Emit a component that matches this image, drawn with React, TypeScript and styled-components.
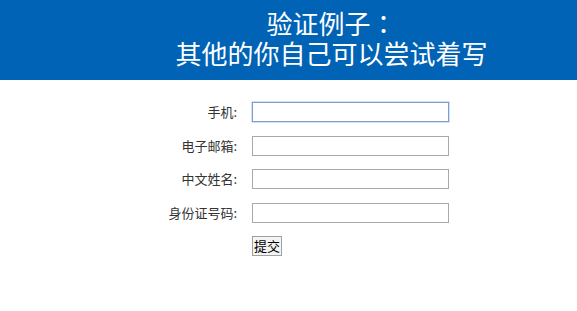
import React from "react";
import styled, { createGlobalStyle } from "styled-components";

const GlobalStyle = createGlobalStyle`
  html, body { margin: 0; padding: 0; background: #ffffff; }
  body { font-family: "Noto Sans CJK SC", "Noto Sans", sans-serif; }
`;

const Header = styled.header`
  background: #0063b6;
  height: 80px;
  box-sizing: border-box;
  padding: 8px 0 0 86px;
  text-align: center;
`;

const Title = styled.h1`
  margin: 0;
  color: #ffffff;
  font-size: 26px;
  font-weight: normal;
  line-height: 30px;
`;

const Colon = styled.span`
  font-family: "Noto Sans CJK TC", "Noto Sans CJK SC", sans-serif;
`;

const Form = styled.form`
  display: grid;
  grid-template-columns: 240px 197px;
  column-gap: 12px;
  row-gap: 13.5px;
  padding-top: 22px;
  align-items: center;
`;

const Label = styled.label`
  font-size: 13px;
  color: #333333;
  text-align: right;
  padding-right: 3px;
  line-height: 20px;
`;

const Input = styled.input<{ $focused?: boolean }>`
  box-sizing: border-box;
  width: 197px;
  height: 20px;
  margin: 0;
  padding: 1px 3px;
  font-size: 13px;
  font-family: inherit;
  background: #ffffff;
  border: 1px solid ${(p) => (p.$focused ? "#7b9dd4" : "#a9a9a9")};
  box-shadow: ${(p) => (p.$focused ? "0 0 0 0.5px #a9c0e6" : "none")};
  outline: none;
`;

const Button = styled.button`
  grid-column: 2;
  justify-self: start;
  box-sizing: border-box;
  height: 20px;
  width: 30px;
  padding: 0;
  margin: 0;
  font-size: 13px;
  line-height: 18px;
  font-family: inherit;
  color: #000000;
  background: #f4f4f4;
  border: 1px solid #a0a0a0;
  border-radius: 0;
`;

const fields = [
  { id: "phone", label: "手机:", focused: true },
  { id: "email", label: "电子邮箱:" },
  { id: "name", label: "中文姓名:" },
  { id: "idcard", label: "身份证号码:" },
];

export default function App() {
  return (
    <>
      <GlobalStyle />
      <Header>
        <Title>
          验证例子<Colon>：</Colon>
          <br />
          其他的你自己可以尝试着写
        </Title>
      </Header>
      <Form onSubmit={(e) => e.preventDefault()}>
        {fields.map((f) => (
          <React.Fragment key={f.id}>
            <Label htmlFor={f.id}>{f.label}</Label>
            <Input id={f.id} type="text" $focused={f.focused} />
          </React.Fragment>
        ))}
        <Button type="submit">提交</Button>
      </Form>
    </>
  );
}
